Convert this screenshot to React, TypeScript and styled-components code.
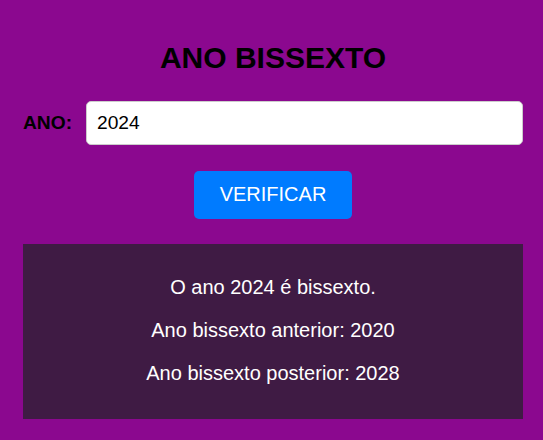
import React, { useState } from "react";
import styled, { createGlobalStyle } from "styled-components";

const Global = createGlobalStyle`
  html, body {
    margin: 0;
    padding: 0;
    background: #8b088f;
    font-family: "Liberation Sans", Arial, sans-serif;
  }
`;

const Page = styled.div`
  padding: 41px 20px 22px 23px;
`;

const Container = styled.main`
  width: 500px;
  display: flex;
  flex-direction: column;
  align-items: stretch;
`;

const Title = styled.h1`
  margin: 0 0 25.5px;
  font-size: 30px;
  font-weight: bold;
  color: #000;
  text-align: center;
`;

const FieldRow = styled.div`
  display: flex;
  align-items: center;
  gap: 14px;
`;

const Label = styled.label`
  font-size: 19.2px;
  font-weight: bold;
  color: #000;
`;

const Input = styled.input`
  flex: 1;
  min-width: 0;
  height: 44px;
  box-sizing: border-box;
  padding: 0 10px;
  border: 1px solid #ccc;
  border-radius: 5px;
  background: #fff;
  font-family: "Liberation Sans", Arial, sans-serif;
  font-size: 19.2px;
  color: #000;
  outline: none;
`;

const ButtonRow = styled.div`
  display: flex;
  justify-content: center;
  margin: 26px 0 25px;
`;

const Button = styled.button`
  height: 48px;
  padding: 0 25.5px;
  border: none;
  border-radius: 5px;
  background: #007bff;
  color: #fff;
  font-family: "Liberation Sans", Arial, sans-serif;
  font-size: 20px;
  cursor: pointer;
`;

const Result = styled.section`
  background: #3f1b44;
  padding: 12px 0 14px;
  text-align: center;
`;

const Line = styled.p`
  margin: 20px 0;
  font-size: 20px;
  color: #fff;
`;

export default function App() {
  const [year, setYear] = useState("2024");
  return (
    <>
      <Global />
      <Page>
        <Container>
          <Title>ANO BISSEXTO</Title>
          <FieldRow>
            <Label htmlFor="ano">ANO:</Label>
            <Input id="ano" value={year} onChange={(e) => setYear(e.target.value)} />
          </FieldRow>
          <ButtonRow>
            <Button>VERIFICAR</Button>
          </ButtonRow>
          <Result>
            <Line>O ano 2024 é bissexto.</Line>
            <Line>Ano bissexto anterior: 2020</Line>
            <Line>Ano bissexto posterior: 2028</Line>
          </Result>
        </Container>
      </Page>
    </>
  );
}
